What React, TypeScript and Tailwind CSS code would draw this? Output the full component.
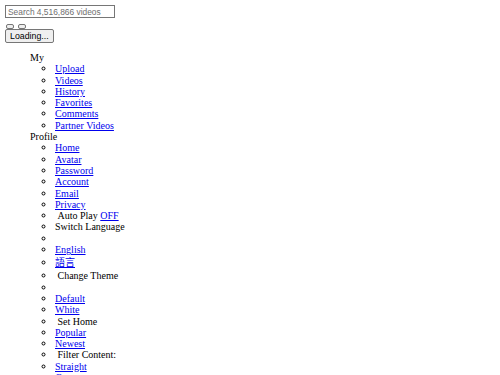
import React from 'react';

type Item = { label: string; link?: boolean; postLink?: string; blank?: boolean; tall?: boolean };

const myItems: Item[] = [
  { label: 'Upload', link: true },
  { label: 'Videos', link: true },
  { label: 'History', link: true },
  { label: 'Favorites', link: true },
  { label: 'Comments', link: true },
  { label: 'Partner Videos', link: true },
];

const profileItems: Item[] = [
  { label: 'Home', link: true },
  { label: 'Avatar', link: true },
  { label: 'Password', link: true },
  { label: 'Account', link: true },
  { label: 'Email', link: true },
  { label: 'Privacy', link: true },
  { label: '\u00a0Auto Play ', postLink: 'OFF' },
  { label: 'Switch Language' },
  { label: '', blank: true },
  { label: 'English', link: true },
  { label: '語言', link: true, tall: true },
  { label: '\u00a0Change Theme' },
  { label: '', blank: true },
  { label: 'Default', link: true },
  { label: 'White', link: true },
  { label: '\u00a0Set Home' },
  { label: 'Popular', link: true },
  { label: 'Newest', link: true },
  { label: '\u00a0Filter Content:' },
  { label: 'Straight', link: true },
  { label: 'Gay', link: true },
];

const linkCls = 'text-[#0000ee] underline';

function SubList({ items }: { items: Item[] }) {
  return (
    <ul className="list-[circle] pl-[25px]">
      {items.map((it, i) => (
        <li key={i} className={it.tall ? 'leading-[15px]' : ''}>
          {it.blank ? '\u00a0' : it.link ? <a href="#" className={linkCls}>{it.label}</a> : <span>{it.label}</span>}
          {it.postLink && <a href="#" className={linkCls}>{it.postLink}</a>}
        </li>
      ))}
    </ul>
  );
}

export default function App() {
  return (
    <div className="bg-white text-black p-[5px] font-['Liberation_Serif','Noto_Sans_CJK_TC',serif] text-[10px] leading-[11.3px] h-[375px] overflow-hidden">
      <input
        type="text"
        placeholder="Search 4,516,866 videos"
        className="block w-[110px] h-[13px] border border-[#767676] px-[2px] font-['Liberation_Sans',sans-serif] text-[8.4px] placeholder:text-[#6f6f6f]"
      />
      <div className="mt-[6px] flex gap-[4px] pl-[1px]">
        <button className="w-[8px] h-[5px] border border-[#767676] bg-[#efefef] rounded-[2px]" />
        <button className="w-[8px] h-[5px] border border-[#767676] bg-[#efefef] rounded-[2px]" />
      </div>
      <button className="block h-[14px] px-[4px] border border-[#767676] bg-[#efefef] rounded-[2px] font-['Liberation_Sans',sans-serif] text-[8.8px] font-normal leading-none">
        Loading...
      </button>
      <ul className="mt-[9px] pl-[25px]">
        <li>
          My
          <SubList items={myItems} />
        </li>
        <li>
          Profile
          <SubList items={profileItems} />
        </li>
      </ul>
    </div>
  );
}
